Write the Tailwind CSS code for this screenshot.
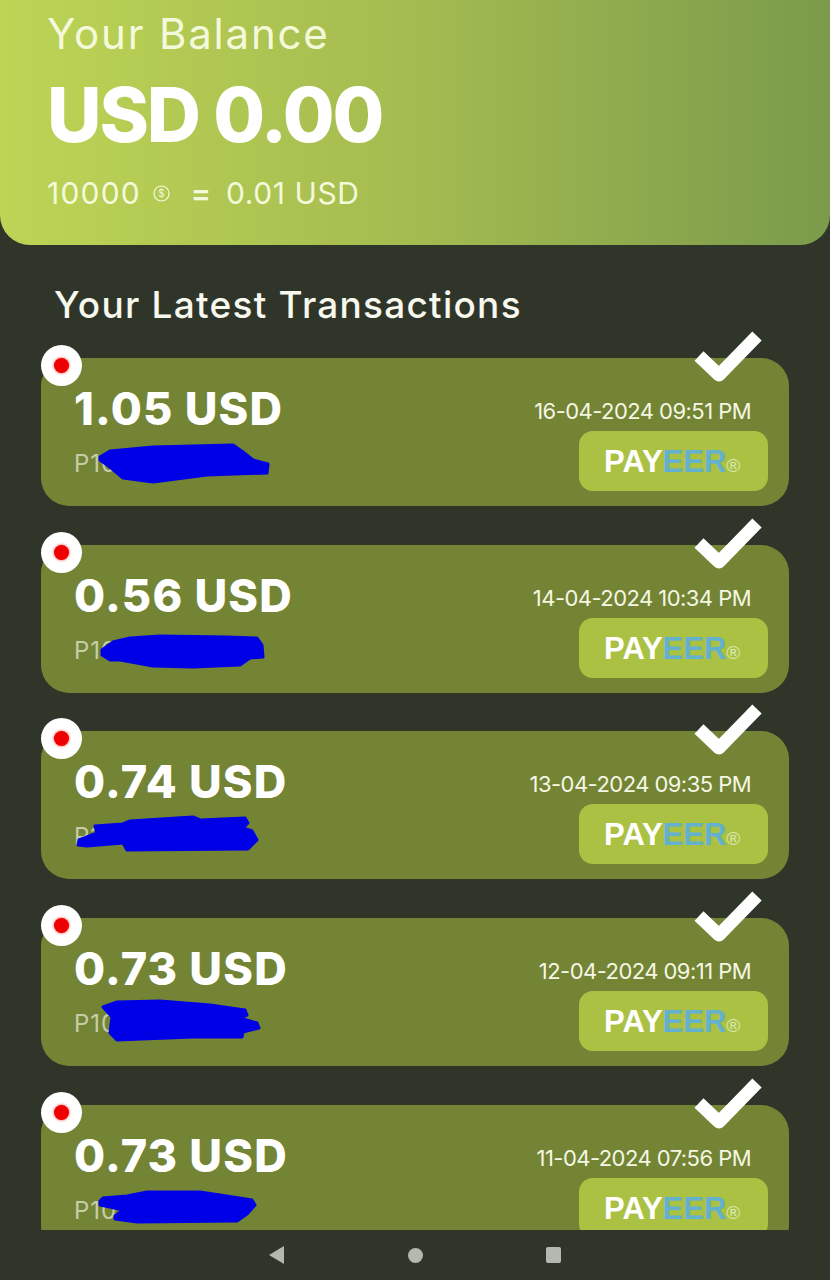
<!DOCTYPE html>
<html lang="en">
<head>
  <meta charset="UTF-8" />
  <meta name="viewport" content="width=device-width, initial-scale=1" />
  <title>Your Balance</title>
  <script src="https://cdn.jsdelivr.net/npm/@tailwindcss/browser@4"></script>
</head>
<body class="bg-[#30352a] font-['Inter',sans-serif] text-white">
  <div class="w-[830px] h-[1280px] flex flex-col overflow-hidden">

    <!-- balance header -->
    <header class="h-[245px] shrink-0 rounded-b-[30px] bg-gradient-to-r from-[#bcd555] via-[#a4bb50] to-[#7b9b4b] pl-[47px] text-[#f5f9dc]">
      <p class="pt-[11px] text-[42px] leading-[46px] font-normal tracking-[1.8px]">Your Balance</p>
      <p class="mt-[16px] text-[75px] leading-[84px] font-extrabold text-white tracking-[-2.1px]">USD 0.00</p>
      <div class="mt-[18px] flex items-center text-[30px] leading-[36px] font-normal">
        <span class="tracking-[1.2px]">10000</span>
        <svg class="ml-[12px] w-[17px] h-[17px]" viewBox="0 0 17 17" fill="none" stroke="currentColor">
          <circle cx="8.5" cy="8.5" r="7.5" stroke-width="1.2" />
          <text x="8.5" y="12" text-anchor="middle" font-size="10" fill="currentColor" stroke="none">$</text>
        </svg>
        <span class="ml-[20px] w-[22px] text-center font-semibold">=</span>
        <span class="ml-[14px] tracking-[0.6px]">0.01 USD</span>
      </div>
    </header>

    <h2 class="pl-[54px] pt-[38px] text-[37px] leading-[44px] font-medium tracking-[1.25px] text-[#f7f8ee]">Your Latest Transactions</h2>

    <!-- transactions, cut off by the nav bar -->
    <main class="mt-[3px] pt-[28px] h-[900px] shrink-0 overflow-hidden flex flex-col gap-[38.67px] px-[41px]">

      <div class="relative h-[148px] shrink-0 rounded-[28px] bg-[#748435]">
        <span class="absolute left-0 -top-[13px] w-[41px] h-[41px] rounded-full bg-white flex items-center justify-center"><span class="w-[15px] h-[15px] rounded-full bg-[#ee0000] shadow-[0_0_3px_#ff3030]"></span></span>
        <svg class="absolute right-[24px] -top-[28px] w-[72px] h-[58px]" viewBox="0 0 72 58" fill="none"><path d="M6 26 L26 45 L64 6" stroke="#fff" stroke-width="13" stroke-linejoin="round" /></svg>
        <p class="pl-[33px] pt-[26px] text-[45px] leading-[50px] font-extrabold tracking-[1.2px]">1.05 USD</p>
        <p class="pl-[33px] pt-[15px] text-[24px] leading-[30px] tracking-[1px] text-[#c6cdaa]">P10</p>
        <svg class="absolute left-0 top-0 w-[300px] h-[148px]" viewBox="0 0 300 148"><path d="M59 99 L69 93 L112 89 L192 87 L202 94 L212 102 L227 106 L226 115 L166 117 L112 124 L82 120 L69 109 L59 102 Z" fill="#0000e6" stroke="#0000e6" stroke-width="3" stroke-linejoin="round" /></svg>
        <p class="absolute right-[38px] top-[39px] text-[22px] leading-[28px] font-normal tracking-[-0.55px] text-[#f5f7e4]">16-04-2024 09:51 PM</p>
        <div class="absolute right-[21px] top-[73px] w-[189px] h-[60px] rounded-[14px] bg-[#abc144] pl-[25px] pt-[12px] font-['Liberation_Sans',sans-serif] font-bold text-[31px] leading-[38px]"><span>PAY</span><span class="text-[#63b0cf]">EER</span><span class="font-normal text-[19px] text-[#dce8b0]">®</span></div>
      </div>

      <div class="relative h-[148px] shrink-0 rounded-[28px] bg-[#748435]">
        <span class="absolute left-0 -top-[13px] w-[41px] h-[41px] rounded-full bg-white flex items-center justify-center"><span class="w-[15px] h-[15px] rounded-full bg-[#ee0000] shadow-[0_0_3px_#ff3030]"></span></span>
        <svg class="absolute right-[24px] -top-[28px] w-[72px] h-[58px]" viewBox="0 0 72 58" fill="none"><path d="M6 26 L26 45 L64 6" stroke="#fff" stroke-width="13" stroke-linejoin="round" /></svg>
        <p class="pl-[33px] pt-[26px] text-[45px] leading-[50px] font-extrabold tracking-[1.2px]">0.56 USD</p>
        <p class="pl-[33px] pt-[15px] text-[24px] leading-[30px] tracking-[1px] text-[#c6cdaa]">P10</p>
        <svg class="absolute left-0 top-0 w-[300px] h-[148px]" viewBox="0 0 300 148"><path d="M61 105 L72 97 L89 93 L119 91 L186 92 L216 93 L221 100 L222 112 L209 113 L199 120 L152 122 L112 121 L79 115 L69 115 L61 110 Z" fill="#0000e6" stroke="#0000e6" stroke-width="3" stroke-linejoin="round" /></svg>
        <p class="absolute right-[38px] top-[39px] text-[22px] leading-[28px] font-normal tracking-[-0.55px] text-[#f5f7e4]">14-04-2024 10:34 PM</p>
        <div class="absolute right-[21px] top-[73px] w-[189px] h-[60px] rounded-[14px] bg-[#abc144] pl-[25px] pt-[12px] font-['Liberation_Sans',sans-serif] font-bold text-[31px] leading-[38px]"><span>PAY</span><span class="text-[#63b0cf]">EER</span><span class="font-normal text-[19px] text-[#dce8b0]">®</span></div>
      </div>

      <div class="relative h-[148px] shrink-0 rounded-[28px] bg-[#748435]">
        <span class="absolute left-0 -top-[13px] w-[41px] h-[41px] rounded-full bg-white flex items-center justify-center"><span class="w-[15px] h-[15px] rounded-full bg-[#ee0000] shadow-[0_0_3px_#ff3030]"></span></span>
        <svg class="absolute right-[24px] -top-[28px] w-[72px] h-[58px]" viewBox="0 0 72 58" fill="none"><path d="M6 26 L26 45 L64 6" stroke="#fff" stroke-width="13" stroke-linejoin="round" /></svg>
        <p class="pl-[33px] pt-[26px] text-[45px] leading-[50px] font-extrabold tracking-[1.2px]">0.74 USD</p>
        <p class="pl-[33px] pt-[15px] text-[24px] leading-[30px] tracking-[1px] text-[#c6cdaa]">P10</p>
        <svg class="absolute left-0 top-0 w-[300px] h-[148px]" viewBox="0 0 300 148"><path d="M54 95 L82 93 L89 90 L152 86 L159 89 L204 87 L207 92 L202 97 L211 100 L216 109 L207 118 L86 119 L82 112 L46 115 L37 114 L38 109 L56 102 Z" fill="#0000e6" stroke="#0000e6" stroke-width="3" stroke-linejoin="round" /></svg>
        <p class="absolute right-[38px] top-[39px] text-[22px] leading-[28px] font-normal tracking-[-0.55px] text-[#f5f7e4]">13-04-2024 09:35 PM</p>
        <div class="absolute right-[21px] top-[73px] w-[189px] h-[60px] rounded-[14px] bg-[#abc144] pl-[25px] pt-[12px] font-['Liberation_Sans',sans-serif] font-bold text-[31px] leading-[38px]"><span>PAY</span><span class="text-[#63b0cf]">EER</span><span class="font-normal text-[19px] text-[#dce8b0]">®</span></div>
      </div>

      <div class="relative h-[148px] shrink-0 rounded-[28px] bg-[#748435]">
        <span class="absolute left-0 -top-[13px] w-[41px] h-[41px] rounded-full bg-white flex items-center justify-center"><span class="w-[15px] h-[15px] rounded-full bg-[#ee0000] shadow-[0_0_3px_#ff3030]"></span></span>
        <svg class="absolute right-[24px] -top-[28px] w-[72px] h-[58px]" viewBox="0 0 72 58" fill="none"><path d="M6 26 L26 45 L64 6" stroke="#fff" stroke-width="13" stroke-linejoin="round" /></svg>
        <p class="pl-[33px] pt-[26px] text-[45px] leading-[50px] font-extrabold tracking-[1.2px]">0.73 USD</p>
        <p class="pl-[33px] pt-[15px] text-[24px] leading-[30px] tracking-[1px] text-[#c6cdaa]">P10</p>
        <svg class="absolute left-0 top-0 w-[300px] h-[148px]" viewBox="0 0 300 148"><path d="M62 89 L76 84 L119 83 L169 87 L204 92 L206 97 L199 100 L216 105 L218 110 L202 114 L201 119 L152 119 L76 122 L69 115 L71 99 Z" fill="#0000e6" stroke="#0000e6" stroke-width="3" stroke-linejoin="round" /></svg>
        <p class="absolute right-[38px] top-[39px] text-[22px] leading-[28px] font-normal tracking-[-0.55px] text-[#f5f7e4]">12-04-2024 09:11 PM</p>
        <div class="absolute right-[21px] top-[73px] w-[189px] h-[60px] rounded-[14px] bg-[#abc144] pl-[25px] pt-[12px] font-['Liberation_Sans',sans-serif] font-bold text-[31px] leading-[38px]"><span>PAY</span><span class="text-[#63b0cf]">EER</span><span class="font-normal text-[19px] text-[#dce8b0]">®</span></div>
      </div>

      <div class="relative h-[148px] shrink-0 rounded-[28px] bg-[#748435]">
        <span class="absolute left-0 -top-[13px] w-[41px] h-[41px] rounded-full bg-white flex items-center justify-center"><span class="w-[15px] h-[15px] rounded-full bg-[#ee0000] shadow-[0_0_3px_#ff3030]"></span></span>
        <svg class="absolute right-[24px] -top-[28px] w-[72px] h-[58px]" viewBox="0 0 72 58" fill="none"><path d="M6 26 L26 45 L64 6" stroke="#fff" stroke-width="13" stroke-linejoin="round" /></svg>
        <p class="pl-[33px] pt-[26px] text-[45px] leading-[50px] font-extrabold tracking-[1.2px]">0.73 USD</p>
        <p class="pl-[33px] pt-[15px] text-[24px] leading-[30px] tracking-[1px] text-[#c6cdaa]">P10</p>
        <svg class="absolute left-0 top-0 w-[300px] h-[148px]" viewBox="0 0 300 148"><path d="M59 96 L62 93 L86 91 L106 87 L159 87 L192 92 L211 95 L214 100 L206 109 L196 116 L96 117 L74 114 L74 111 L82 105 L69 102 L59 100 Z" fill="#0000e6" stroke="#0000e6" stroke-width="3" stroke-linejoin="round" /></svg>
        <p class="absolute right-[38px] top-[39px] text-[22px] leading-[28px] font-normal tracking-[-0.55px] text-[#f5f7e4]">11-04-2024 07:56 PM</p>
        <div class="absolute right-[21px] top-[73px] w-[189px] h-[60px] rounded-[14px] bg-[#abc144] pl-[25px] pt-[12px] font-['Liberation_Sans',sans-serif] font-bold text-[31px] leading-[38px]"><span>PAY</span><span class="text-[#63b0cf]">EER</span><span class="font-normal text-[19px] text-[#dce8b0]">®</span></div>
      </div>
    </main>

    <!-- android nav bar -->
    <nav class="h-[50px] shrink-0 flex items-center justify-center gap-[123.5px] text-[#b4b8b0]">
      <svg class="w-[15px] h-[18px]" viewBox="0 0 15 18" fill="currentColor"><path d="M15 0 L15 18 L0 9 Z" /></svg>
      <span class="w-[15px] h-[15px] rounded-full bg-[#b4b8b0]"></span>
      <span class="w-[15px] h-[16px] rounded-[2px] bg-[#b4b8b0]"></span>
    </nav>
  </div>
</body>
</html>
